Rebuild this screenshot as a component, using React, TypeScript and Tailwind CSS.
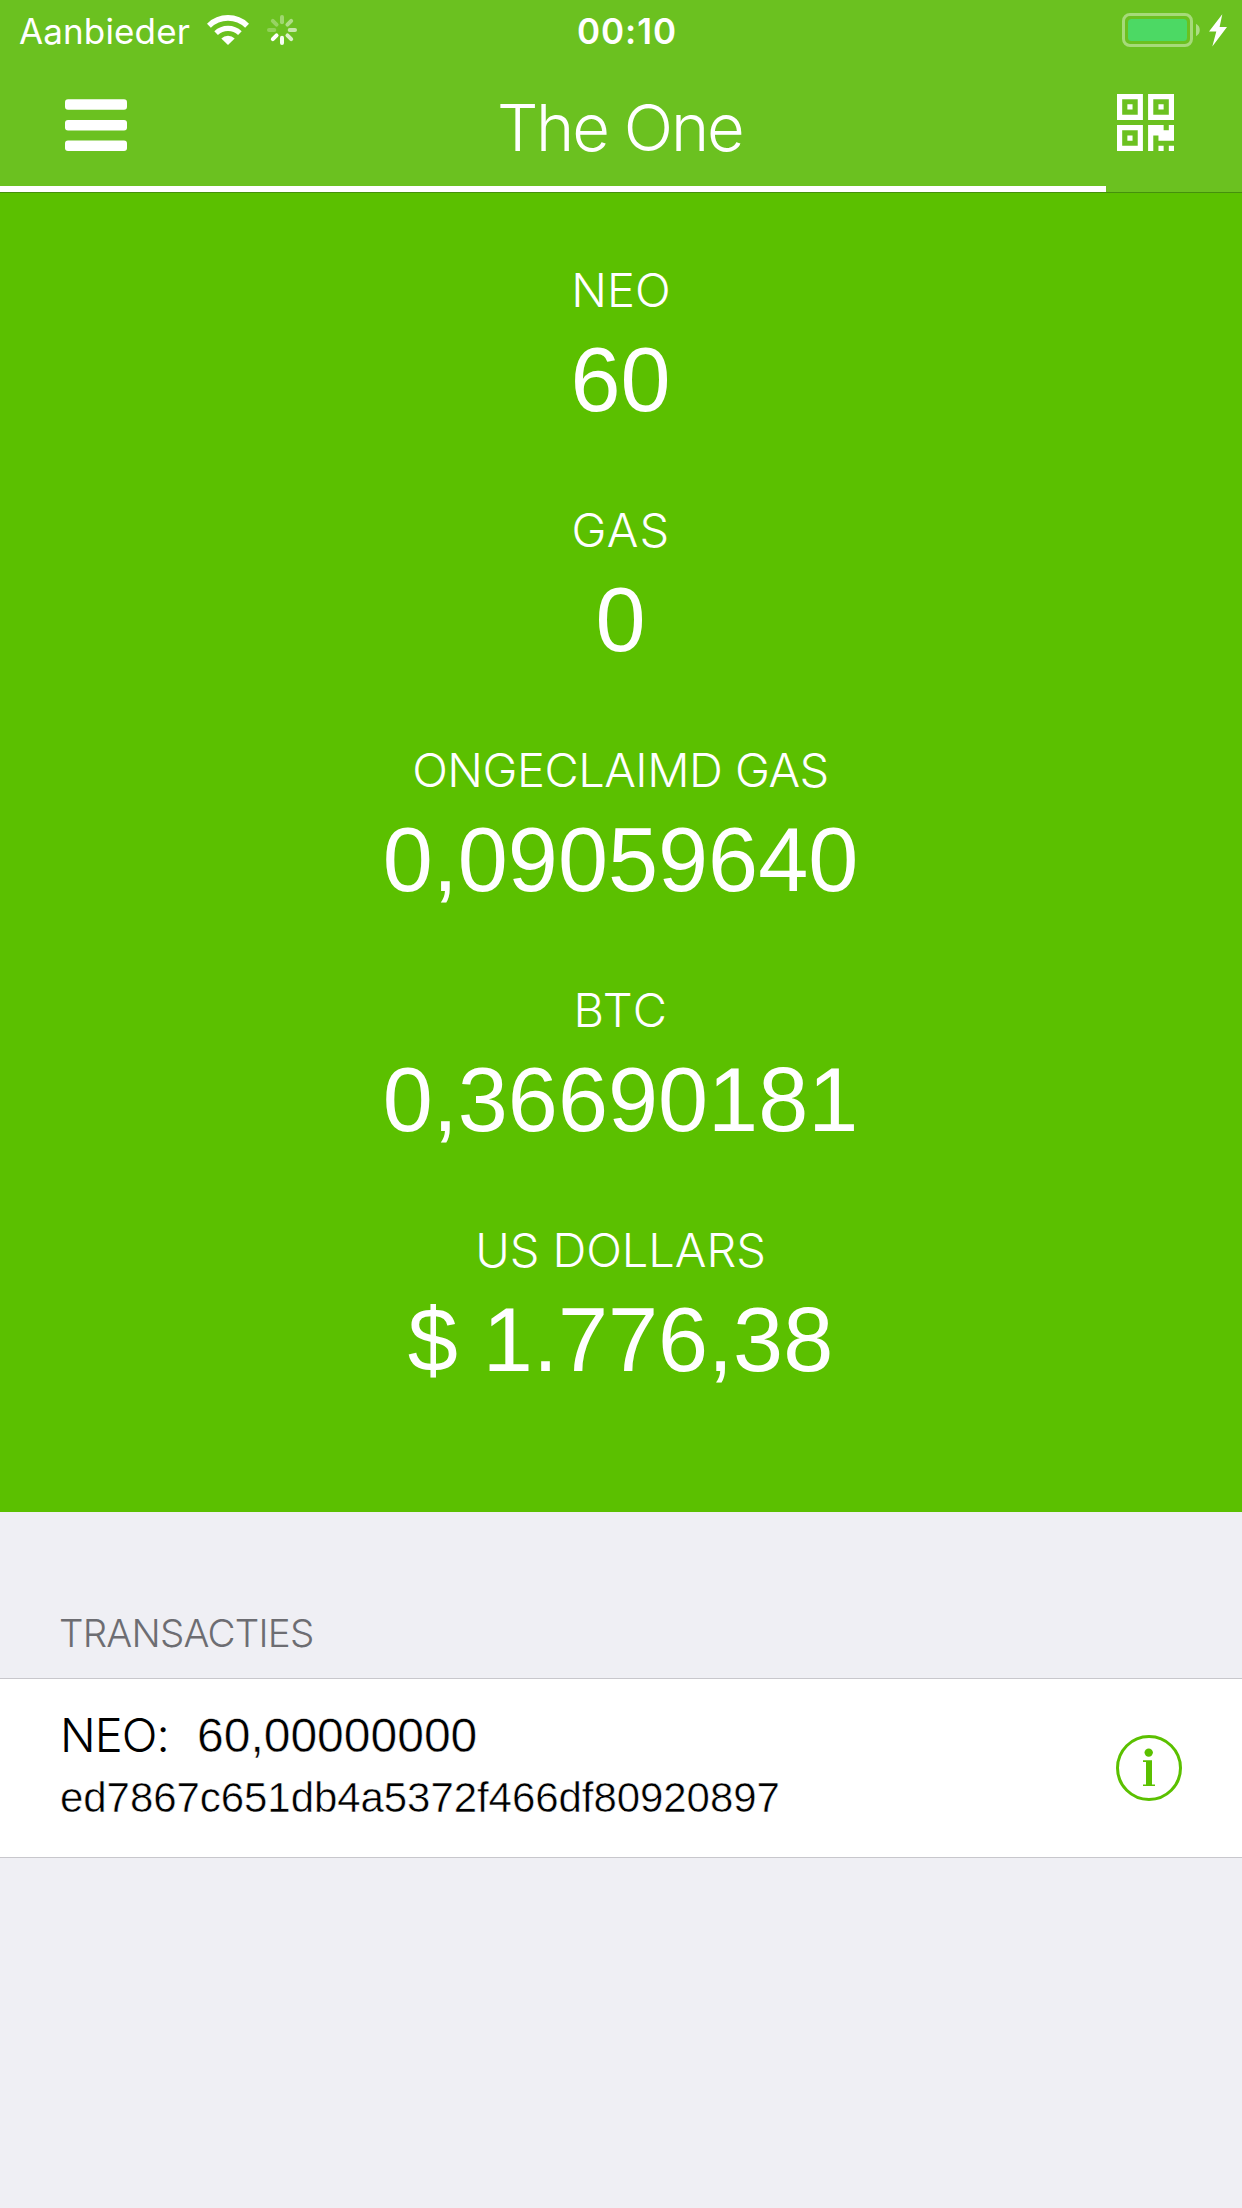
const balances = [
  { label: "NEO", value: "60", labelClass: "tracking-[0px]" },
  { label: "GAS", value: "0", labelClass: "tracking-[1.2px]" },
  { label: "ONGECLAIMD GAS", value: "0,09059640", labelClass: "tracking-[-0.5px] pr-[1px]" },
  { label: "BTC", value: "0,36690181", labelClass: "tracking-[1.4px]" },
  { label: "US DOLLARS", value: "$ 1.776,38", labelClass: "tracking-[-0.06px] pr-[1px]" },
];

function WifiIcon() {
  return (
    <svg width="42" height="30" viewBox="0 0 42 30" className="shrink-0">
      <g fill="none" stroke="#fff">
        <path d="M1.9 10.7 A27.3 27.3 0 0 1 40.1 10.7" strokeWidth="5.6" />
        <path d="M9.1 18.1 A17.2 17.2 0 0 1 32.9 18.1" strokeWidth="5.2" />
      </g>
      <path d="M21 30 L14.3 23.4 A9.8 9.8 0 0 1 27.7 23.4 Z" fill="#fff" />
    </svg>
  );
}

const spokes = [
  { angle: 0, opacity: 0.36 },
  { angle: 45, opacity: 0.46 },
  { angle: 90, opacity: 0.62 },
  { angle: 135, opacity: 0.76 },
  { angle: 180, opacity: 0.95 },
  { angle: 225, opacity: 1 },
  { angle: 270, opacity: 0.26 },
  { angle: 315, opacity: 0.3 },
];

function Spinner() {
  return (
    <svg width="30" height="30" viewBox="0 0 30 30" className="shrink-0">
      {spokes.map((s) => (
        <rect
          key={s.angle}
          x="13"
          y="0"
          width="4"
          height="9.3"
          rx="2"
          fill="#fff"
          opacity={s.opacity}
          transform={`rotate(${s.angle} 15 15)`}
        />
      ))}
    </svg>
  );
}

function Battery() {
  return (
    <svg width="106" height="34" viewBox="0 0 106 34" className="shrink-0">
      <rect x="1.5" y="1.5" width="68" height="31" rx="6.5" fill="none" stroke="#fff" strokeOpacity="0.4" strokeWidth="3" />
      <rect x="6" y="6" width="59" height="22" rx="3.5" fill="#4cd964" />
      <path d="M74 10.8 A7 7 0 0 1 74 23.2 Z" fill="#fff" fillOpacity="0.45" />
      <path d="M100.3 1.2 L87 18.6 L94.3 18.6 L90.3 33.6 L105 14 L97.6 14 Z" fill="#fff" />
    </svg>
  );
}

function MenuIcon() {
  return (
    <svg width="62" height="52" viewBox="0 0 62 52" className="shrink-0" fill="#fff">
      <rect x="0" y="0.2" width="62" height="10.6" rx="3" />
      <rect x="0" y="21" width="62" height="10.6" rx="3" />
      <rect x="0" y="41.4" width="62" height="10.6" rx="3" />
    </svg>
  );
}

function QrIcon() {
  return (
    <svg width="57" height="57" viewBox="0 0 11 11" className="shrink-0" fill="#fff">
      <path fillRule="evenodd" d="M0 0h5v5H0z M1 1v3h3V1z" />
      <path fillRule="evenodd" d="M6 0h5v5H6z M7 1v3h3V1z" />
      <path fillRule="evenodd" d="M0 6h5v5H0z M1 7v3h3V7z" />
      <path d="M2 2h1v1H2z M8 2h1v1H8z M2 8h1v1H2z" />
      <path d="M6 6h3v1h1V6h1v3H8V8H7v3H6z M8 10h1v1H8z M10 10h1v1h-1z" />
    </svg>
  );
}

function InfoIcon() {
  return (
    <svg width="66" height="66" viewBox="0 0 66 66" className="shrink-0">
      <circle cx="33" cy="33" r="31.5" fill="none" stroke="#5bc000" strokeWidth="3" />
      <circle cx="32.7" cy="17.6" r="4.2" fill="#5bc000" />
      <path d="M27 25.3 H36 V49.4 H39 V51 H27 V49.4 H30 V27 H27 Z" fill="#5bc000" />
    </svg>
  );
}

export default function App() {
  return (
    <div className="flex h-[2208px] w-[1242px] flex-col overflow-hidden bg-[#efeff4] font-['Inter',sans-serif]">
      <header className="flex h-[193px] shrink-0 flex-col border-b border-[#45900c] bg-[#6bc120] text-white">
        <div className="flex h-[60px] items-center">
          <div className="flex w-[577px] items-center pl-[19px]">
            <span className="w-[188px] pt-[2px] text-[35px] leading-[60px] tracking-[0.13px]">Aanbieder</span>
            <WifiIcon />
            <div className="pl-[18px]">
              <Spinner />
            </div>
          </div>
          <span className="pt-[2px] text-[35px] leading-[60px] font-semibold tracking-[0.97px]">00:10</span>
          <div className="ml-auto pr-[14px]">
            <Battery />
          </div>
        </div>
        <div className="flex h-[126px] items-start">
          <div className="w-[497px] pt-[39px] pl-[65px]">
            <MenuIcon />
          </div>
          <h1 className="pt-[28px] text-[65px] leading-[80px] font-[260] tracking-[-2.2px]">The One</h1>
          <div className="ml-auto pt-[34px] pr-[68px]">
            <QrIcon />
          </div>
        </div>
        <div className="h-[6px] w-[1106px] bg-white" />
      </header>

      <section className="flex h-[1319px] shrink-0 flex-col gap-[75px] bg-[#5bc000] pt-[67px] text-center text-white">
        {balances.map((b) => (
          <div key={b.label} className="flex flex-col gap-[15px]">
            <div className={`text-[47px] leading-[60px] font-light ${b.labelClass}`}>{b.label}</div>
            <div className="pr-[1px] font-['Liberation_Sans',sans-serif] text-[90px] leading-[90px]">{b.value}</div>
          </div>
        ))}
      </section>

      <section>
        <h2 className="h-[166px] pt-[97px] pl-[59px] text-[38.5px] leading-[48px] font-light tracking-[-0.78px] text-[#6d6d72]">
          TRANSACTIES
        </h2>
        <div className="flex h-[180px] items-center justify-between border-y border-[#c8c7cc] bg-white pr-[60px] text-black">
          <div className="h-full pt-[26px] pl-[60px]">
            <div className="flex items-baseline leading-[60px]">
              <span className="w-[137px] text-[47px] font-light tracking-[-0.9px]">NEO:</span>
              <span className="font-['Liberation_Sans',sans-serif] text-[48px] [-webkit-text-stroke:0.5px_white]">
                60,00000000
              </span>
            </div>
            <div className="pt-[7px] font-['Liberation_Sans',sans-serif] text-[42px] leading-[50px] tracking-[-0.06px] [-webkit-text-stroke:0.5px_white]">
              ed7867c651db4a5372f466df80920897
            </div>
          </div>
          <InfoIcon />
        </div>
      </section>
    </div>
  );
}
